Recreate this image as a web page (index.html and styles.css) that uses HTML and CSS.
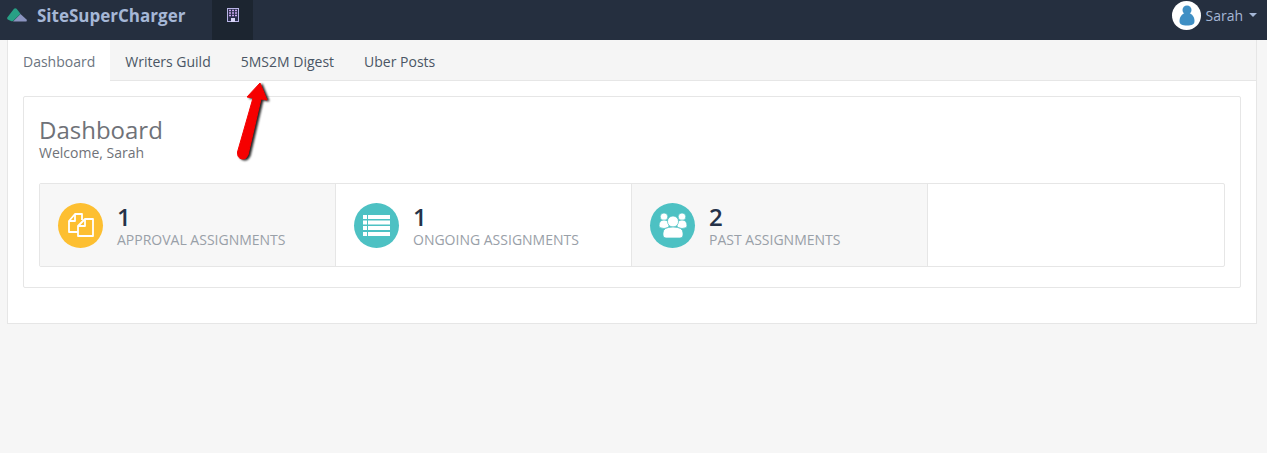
FILE: index.html
```html
<!DOCTYPE html>
<html lang="en">
<head>
	<meta charset="UTF-8">
	<title>SiteSuperCharger</title>
	<link rel="stylesheet" href="styles.css">
</head>
<body>
	<header class="navbar">
		<a class="brand">
			<svg class="brand-logo" width="21" height="14" viewBox="0 0 21 14">
				<path d="M13.500 6 L19.500 11.500 Q20.500 13.500 18.500 13.500 L6 13.500Z" fill="#8b94c0"/>
				<path d="M0.300 9.500 L7 0.800 Q8.200 -0.300 9.600 0.800 L13.500 5.800 L6 13 Q5 13.500 4 13 L0.800 11.500 Q-0.200 10.800 0.300 9.500Z" fill="#27a085"/>
			</svg>
			SiteSuperCharger
		</a>
		<div class="nav-item">
			<svg width="12" height="14" viewBox="0 0 12 14">
				<rect x="0.500" y="0.500" width="11" height="13" fill="#2a2e4c" stroke="#b9b5e6"/>
				<path d="M2 2.500h2M5 2.500h2M8 2.500h2M2 5h2M5 5h2M8 5h2M2 7.500h2M5 7.500h2M8 7.500h2" stroke="#c9a6ee" stroke-width="1.400"/>
				<rect x="4" y="10" width="4" height="4" fill="#d8d4f5"/>
			</svg>
		</div>
		<div class="user">
			<span class="avatar">
				<svg width="18" height="22" viewBox="0 0 18 22">
					<circle cx="9" cy="6" r="4.500" fill="#3f8fc4"/>
					<path d="M9 9 C3 9 1.500 14 1.500 17 C1.500 20.500 4 21.500 9 21.500 C14 21.500 16.500 20.500 16.500 17 C16.500 14 15 9 9 9Z" fill="#3f8fc4"/>
				</svg>
			</span>
			Sarah
			<span class="caret"></span>
		</div>
	</header>

	<main class="wrapper">
		<nav class="tabs">
			<a class="tab active">Dashboard</a>
			<a class="tab">Writers Guild</a>
			<a class="tab">5MS2M Digest</a>
			<a class="tab">Uber Posts</a>
		</nav>
		<div class="tab-body">
			<section class="card">
				<h1>Dashboard</h1>
				<p class="welcome">Welcome, Sarah</p>
				<div class="stats">
					<div class="stat shaded">
						<span class="stat-icon yellow">
							<svg width="26" height="24" viewBox="0 0 26 24" fill="none" stroke="#fff" stroke-width="1.800" stroke-linejoin="round">
								<path d="M10 19 L1 19 L1 8 L7 1 L14 1 L14 7"/>
								<path d="M7 1 L7 8 L1 8"/>
								<path d="M17 6 L25 6 L25 23 L10 23 L10 13 Z"/>
								<path d="M17 6 L17 13 L10 13"/>
							</svg>
						</span>
						<div class="stat-text">
							<div class="stat-num">1</div>
							<div class="stat-label">APPROVAL ASSIGNMENTS</div>
						</div>
					</div>
					<div class="stat">
						<span class="stat-icon teal">
							<svg width="27" height="21" viewBox="0 0 27 21" fill="#fff">
								<rect x="0" y="0" width="4" height="4"/><rect x="5" y="0" width="22" height="4"/>
								<rect x="0" y="5.500" width="4" height="4"/><rect x="5" y="5.500" width="22" height="4"/>
								<rect x="0" y="11" width="4" height="4"/><rect x="5" y="11" width="22" height="4"/>
								<rect x="0" y="17" width="4" height="4"/><rect x="5" y="17" width="22" height="4"/>
							</svg>
						</span>
						<div class="stat-text">
							<div class="stat-num">1</div>
							<div class="stat-label">ONGOING ASSIGNMENTS</div>
						</div>
					</div>
					<div class="stat shaded">
						<span class="stat-icon teal">
							<svg width="28" height="25" viewBox="0 0 28 25" fill="#fff" stroke="#4dc1c3" stroke-width="0.700">
								<circle cx="5" cy="3.800" r="3.800"/>
								<circle cx="23" cy="3.800" r="3.800"/>
								<path d="M0 13 Q0 7 5 7 Q10 7 10 13 Q10 15 5 15.500 Q0 15 0 13Z"/>
								<path d="M18 13 Q18 7 23 7 Q28 7 28 13 Q28 15 23 15.500 Q18 15 18 13Z"/>
								<circle cx="14" cy="8.500" r="5.500"/>
								<path d="M4 20 Q4 14 14 14 Q24 14 24 20 L24 22 Q24 25 21 25 L7 25 Q4 25 4 22Z"/>
							</svg>
						</span>
						<div class="stat-text">
							<div class="stat-num">2</div>
							<div class="stat-label">PAST ASSIGNMENTS</div>
						</div>
					</div>
					<div class="stat"></div>
				</div>
			</section>
		</div>
		<!-- annotation drawn over the screenshot -->
		<svg class="arrow" width="50" height="95" viewBox="0 0 50 95">
			<path d="M30 12 L17 26 L23 27 L7.500 81 Q7 87 12 88 Q16 89 18 84 L31 28 L37 29Z" fill="#f60000" stroke="#f60000" stroke-linejoin="round"/>
		</svg>
	</main>
</body>
</html>
```

FILE: styles.css
```css
*{margin:0;padding:0;box-sizing:border-box;}
body{background-color:#f6f6f6;font-family:"Open Sans","Noto Sans",sans-serif;font-size:14px;color:#555;}

/*top bar*/
.navbar{height:40px;background-color:#252f3f;display:flex;align-items:flex-start;}
.brand{display:flex;align-items:center;gap:9px;height:30px;padding-left:7px;width:212px;font-size:17px;font-weight:700;color:#a5b7d6;}
.nav-item{width:41px;height:40px;padding-top:8px;background-color:#1c2530;display:flex;justify-content:center;}
.user{margin-left:auto;height:30px;display:flex;align-items:center;padding-right:10px;color:#a5b7d6;font-size:14px;}
.avatar{width:29px;height:29px;border-radius:50%;background-color:#fff;display:flex;align-items:center;justify-content:center;margin-right:4px;}
.caret{width:0;height:0;border-top:4px solid #a5b7d6;border-left:4px solid transparent;border-right:4px solid transparent;margin-left:6px;}

/*page box*/
.wrapper{position:relative;margin:0 10px 0 7px;height:284px;background-color:#fff;border:1px solid #e6e6e6;border-top:0;}
.tabs{display:flex;height:41px;background-color:#f5f5f5;border-bottom:1px solid #e6e6e6;}
.tab{padding:0 15px;line-height:43px;height:41px;color:#4a5564;}
.tab.active{background-color:#fff;color:#6b7480;}
.tab-body{padding:15px 15px 0;}
.card{height:192px;border:1px solid #e6e6e6;border-radius:2px;padding:19px 15px 0;}
h1{font-size:24px;font-weight:400;line-height:28px;margin-bottom:1px;color:#6f7278;}
.welcome{line-height:16px;color:#6f7278;}
.stats{display:flex;margin-top:22px;height:84px;border:1px solid #e6e6e6;border-radius:2px;}
.stat{width:296px;flex:none;display:flex;align-items:center;padding-left:18px;gap:14px;border-right:1px solid #e6e6e6;}
.stat:last-child{flex:1;border-right:0;}
.shaded{background-color:#f7f7f7;}
.stat-icon{width:45px;height:45px;border-radius:50%;display:flex;align-items:center;justify-content:center;flex:none;}
.yellow{background-color:#fdbf31;}
.teal{background-color:#4dc1c3;}
.stat-text{padding-top:3px;}
.stat-num{font-size:24px;font-weight:600;line-height:26px;color:#253248;}
.stat-label{font-size:14px;line-height:18px;margin-top:1px;color:#99a0a8;}

.arrow{position:absolute;left:222px;top:31px;filter:drop-shadow(2px 1px 1px #222);}
```
